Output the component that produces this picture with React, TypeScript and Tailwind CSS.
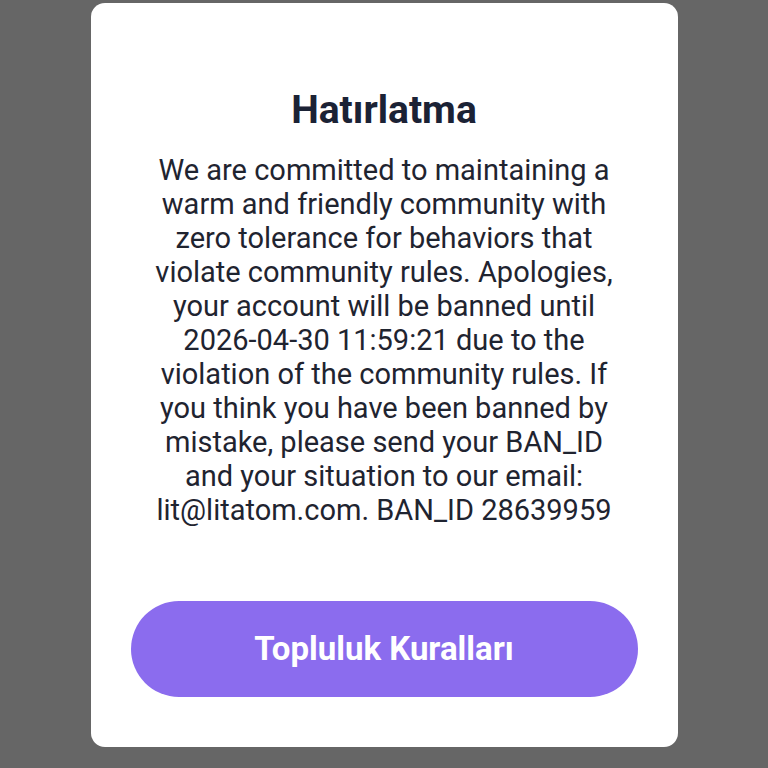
import React from "react";

const lines = [
  "We are committed to maintaining a",
  "warm and friendly community with",
  "zero tolerance for behaviors that",
  "violate community rules. Apologies,",
  "your account will be banned until",
  "2026-04-30 11:59:21 due to the",
  "violation of the community rules. If",
  "you think you have been banned by",
  "mistake, please send your BAN_ID",
  "and your situation to our email:",
  "lit@litatom.com. BAN_ID 28639959",
];

export default function App() {
  return (
    <div
      className="w-[768px] h-[768px] bg-[#666666] flex justify-center pt-[3px] overflow-hidden"
      style={{ fontFamily: "Roboto, 'Noto Sans', sans-serif" }}
    >
      <div className="w-[587px] h-[744px] bg-white rounded-[14px] flex flex-col items-center pt-[87px] pb-[50px] px-[40px]">
        <h1 className="text-[39px] leading-[40px] font-bold text-[#1b2235]">Hatırlatma</h1>
        <p className="mt-[23px] text-[29px] leading-[34px] text-[#1f2430] text-center whitespace-nowrap">
          {lines.map((line, i) => (
            <React.Fragment key={i}>
              {line}
              {i < lines.length - 1 && <br />}
            </React.Fragment>
          ))}
        </p>
        <button className="mt-auto w-full h-[96px] rounded-full bg-[#8b6cee] text-white text-[33px] font-bold">
          Topluluk Kuralları
        </button>
      </div>
    </div>
  );
}
